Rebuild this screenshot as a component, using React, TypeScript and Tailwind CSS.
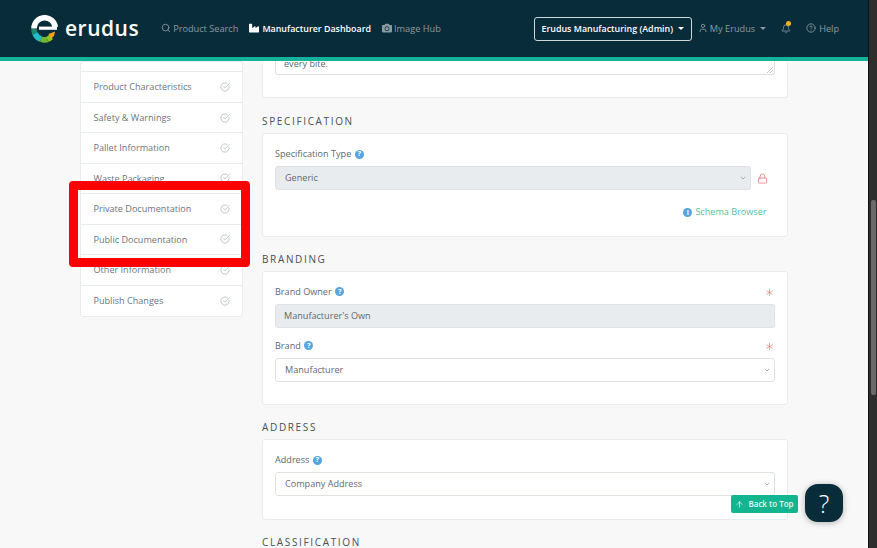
import React from "react";
import { ChevronDown, Search, User, Bell, CircleHelp, CircleCheckBig, Lock, ArrowUp, Asterisk } from "lucide-react";
import { FaIndustry, FaCamera } from "react-icons/fa";

const F = "font-['Open_Sans',sans-serif]";

function Help() {
  return (
    <span className="inline-flex w-[9px] h-[9px] rounded-full bg-[#55a5e0] text-white text-[7.5px] font-bold items-center justify-center ml-[3.5px] leading-none">?</span>
  );
}

function SideItem({ label, last }: { label: string; last?: boolean }) {
  return (
    <div className={`h-[30.7px] flex items-center justify-between pl-[12.5px] pr-[12px] text-[9.1px] text-[#6c757d] ${last ? "" : "border-b border-[#e9ecef]"}`}>
      <span>{label}</span>
      <CircleCheckBig size={10} strokeWidth={1.2} className="text-[#868e96]" />
    </div>
  );
}

function Heading({ children }: { children: React.ReactNode }) {
  return <div className="text-[10px] tracking-[1.65px] text-[#495057] uppercase leading-[14px]">{children}</div>;
}

function Card({ className, children }: { className: string; children?: React.ReactNode }) {
  return <div className={`bg-white border border-[#e9ecef] rounded-[3px] ${className}`}>{children}</div>;
}

function Select({ value, disabled, className }: { value: string; disabled?: boolean; className?: string }) {
  return (
    <div className={`h-[24px] flex items-center justify-between pl-[9px] pr-[3px] rounded-[3px] border border-[#dee2e6] text-[9.1px] text-[#5f6870] ${disabled ? "bg-[#e9ecef]" : "bg-white"} ${className ?? ""}`}>
      <span>{value}</span>
      <ChevronDown size={8} className="text-[#868e96]" />
    </div>
  );
}

function Logo() {
  const seg = (d: string, c: string) => <path d={d} stroke={c} strokeWidth="5.6" fill="none" />;
  return (
    <svg width="27" height="28" viewBox="0 0 27 28" className="shrink-0">
      <path d="M3 13.5 A10.7 10.7 0 0 1 24.3 12" stroke="#fff" strokeWidth="5.6" fill="none" />
      <path d="M8 13.2 H26" stroke="#fff" strokeWidth="3.2" fill="none" />
      {seg("M3 14 A10.7 10.7 0 0 0 4 18.5", "#1f8a70")}
      {seg("M4 18.5 A10.7 10.7 0 0 0 10 24.2", "#1fc0c8")}
      {seg("M10 24.2 A10.7 10.7 0 0 0 16.5 24.5", "#6fb92e")}
      {seg("M16.5 24.5 A10.7 10.7 0 0 0 20 22", "#8fc31f")}
      <path d="M17.5 19 L24 16.5 L23 21 L19.5 24 Z" fill="#f6a21a" />
    </svg>
  );
}

export default function App() {
  return (
    <div className={`${F} w-[877px] h-[548px] overflow-hidden flex bg-[#f8f8f8]`}>
      <div className="w-[868px] h-full flex flex-col overflow-hidden">
        <header className="relative z-10 h-[61px] shrink-0 bg-[#092c3a] border-b-[4px] border-[#12b398] flex items-center">
          <div className="ml-[31px] flex items-center">
            <Logo />
            <span className="ml-[7px] text-[21px] font-semibold tracking-[0.5px] text-white leading-none">erudus</span>
          </div>
          <nav className="ml-[22px] flex items-center gap-[11px] text-[9.2px] text-[#8a9aa2]">
            <span className="flex items-center gap-[2px]"><Search size={10} />Product Search</span>
            <span className="flex items-center gap-[3px] text-white text-[8.9px] font-semibold"><FaIndustry size={10} />Manufacturer Dashboard</span>
            <span className="flex items-center gap-[2px]"><FaCamera size={10} />Image Hub</span>
          </nav>
          <div className="ml-[93px] w-[158px] h-[24px] border border-[#cfd6d9] rounded-[3px] flex items-center justify-center text-[8.9px] font-semibold text-white whitespace-nowrap">
            Erudus Manufacturing (Admin)
            <span className="ml-[5px] border-x-[3px] border-x-transparent border-t-[3px] border-t-white" />
          </div>
          <div className="ml-[6px] flex items-center text-[9.2px] text-[#8a9aa2]">
            <User size={10} className="mr-[2px]" />My Erudus
            <span className="ml-[5px] border-x-[3px] border-x-transparent border-t-[3px] border-t-[#8a9aa2]" />
          </div>
          <div className="ml-[15px] relative">
            <Bell size={10} className="text-[#8a9aa2]" />
            <span className="absolute -top-[3px] left-[5px] w-[5px] h-[5px] rounded-full bg-[#fbb117]" />
          </div>
          <div className="ml-[15px] flex items-center text-[9.2px] text-[#8a9aa2]">
            <CircleHelp size={10} className="mr-[3px]" />Help
          </div>
        </header>

        <div className="flex-1 flex relative">
          <aside className="ml-[80px] w-[163px] shrink-0">
            <Card className="h-[256px] flex flex-col">
              <div className="h-[10.4px] shrink-0 border-b border-[#e9ecef]" />
              {["Product Characteristics", "Safety & Warnings", "Pallet Information", "Waste Packaging", "Private Documentation", "Public Documentation", "Other Information"].map((l) => (
                <SideItem key={l} label={l} />
              ))}
              <SideItem label="Publish Changes" last />
            </Card>
          </aside>

          <main className="ml-[19px] w-[526px] shrink-0">
            <Card className="h-[37px] border-t-0 pl-[12px] pr-[12.5px]">
              <div className="h-[14px] bg-white border border-t-0 border-[#dee2e6] rounded-b-[3px] pl-[8px] text-[9.1px] leading-[6px] text-[#5f6870] relative">
                every bite.
                <svg width="6" height="6" viewBox="0 0 6 6" className="absolute right-[1px] bottom-[1px]"><path d="M0 6 L6 0 M3 6 L6 3" stroke="#aaa" strokeWidth=".7" /></svg>
              </div>
            </Card>

            <div className="mt-[16px]"><Heading>Specification</Heading></div>
            <Card className="mt-[5px] h-[104px] pl-[12px] pr-[12.5px] pt-[13px]">
              <div className="flex items-center text-[9.1px] text-[#5f6870] h-[14px]">Specification Type<Help /></div>
              <div className="mt-[5px] flex items-center">
                <Select value="Generic" disabled className="w-[476px]" />
                <Lock size={11} strokeWidth={1.5} className="ml-[6px] text-[#e56a6a]" />
              </div>
              <div className="mt-[15px] pr-[8px] flex justify-end items-center text-[9.1px] text-[#4fc39f] h-[14px]">
                <span className="w-[9px] h-[9px] mr-[3px] rounded-full bg-[#55a5e0] text-white text-[7px] font-bold flex items-center justify-center leading-none">i</span>Schema Browser
              </div>
            </Card>

            <div className="mt-[15px]"><Heading>Branding</Heading></div>
            <Card className="mt-[5px] h-[134px] pl-[12px] pr-[12.5px] pt-[13px]">
              <div className="flex items-center justify-between text-[9.1px] text-[#5f6870] h-[14px]">
                <span className="flex items-center">Brand Owner<Help /></span>
                <Asterisk size={13} strokeWidth={1.1} className="text-[#ef6b6b] -mr-[1px]" />
              </div>
              <div className="mt-[5px] h-[24px] flex items-center pl-[8px] rounded-[3px] border border-[#dee2e6] bg-[#e9ecef] text-[9.1px] text-[#5f6870]">Manufacturer's Own</div>
              <div className="mt-[11px] flex items-center justify-between text-[9.1px] text-[#5f6870] h-[14px]">
                <span className="flex items-center">Brand<Help /></span>
                <Asterisk size={13} strokeWidth={1.1} className="text-[#ef6b6b] -mr-[1px]" />
              </div>
              <Select value="Manufacturer" className="mt-[5px]" />
            </Card>

            <div className="mt-[15px]"><Heading>Address</Heading></div>
            <Card className="mt-[5px] h-[81px] pl-[12px] pr-[12.5px] pt-[13px]">
              <div className="flex items-center text-[9.1px] text-[#5f6870] h-[14px]">Address<Help /></div>
              <Select value="Company Address" className="mt-[5px]" />
            </Card>

            <div className="mt-[15px]"><Heading>Classification</Heading></div>
          </main>

          <div className="absolute left-[69px] top-[120px] w-[181px] h-[86px] border-[9px] border-[#ff0000] rounded-[4px]" />
          <div className="absolute left-[731px] top-[434px] w-[67px] h-[18px] rounded-[2px] bg-[#12b58f] flex items-center justify-center text-[8px] font-semibold text-[#e6f7f2] whitespace-nowrap">
            <ArrowUp size={9} className="mr-[4px]" />Back to Top
          </div>
          <div className="absolute left-[805px] top-[423px] w-[38px] h-[38px] rounded-[13px] bg-[#092c3a] shadow-[0_1px_6px_rgba(0,0,0,0.3)] flex items-center justify-center text-white text-[25px] font-light leading-none">?</div>
        </div>
      </div>
      <div className="w-[9px] h-full bg-[#2e2e2e] border-l border-[#111] flex flex-col">
        <div className="h-[200px] shrink-0" />
        <div className="w-[5px] ml-[1.5px] h-[195px] rounded-[2px] bg-[#6a6a6a]" />
      </div>
    </div>
  );
}
